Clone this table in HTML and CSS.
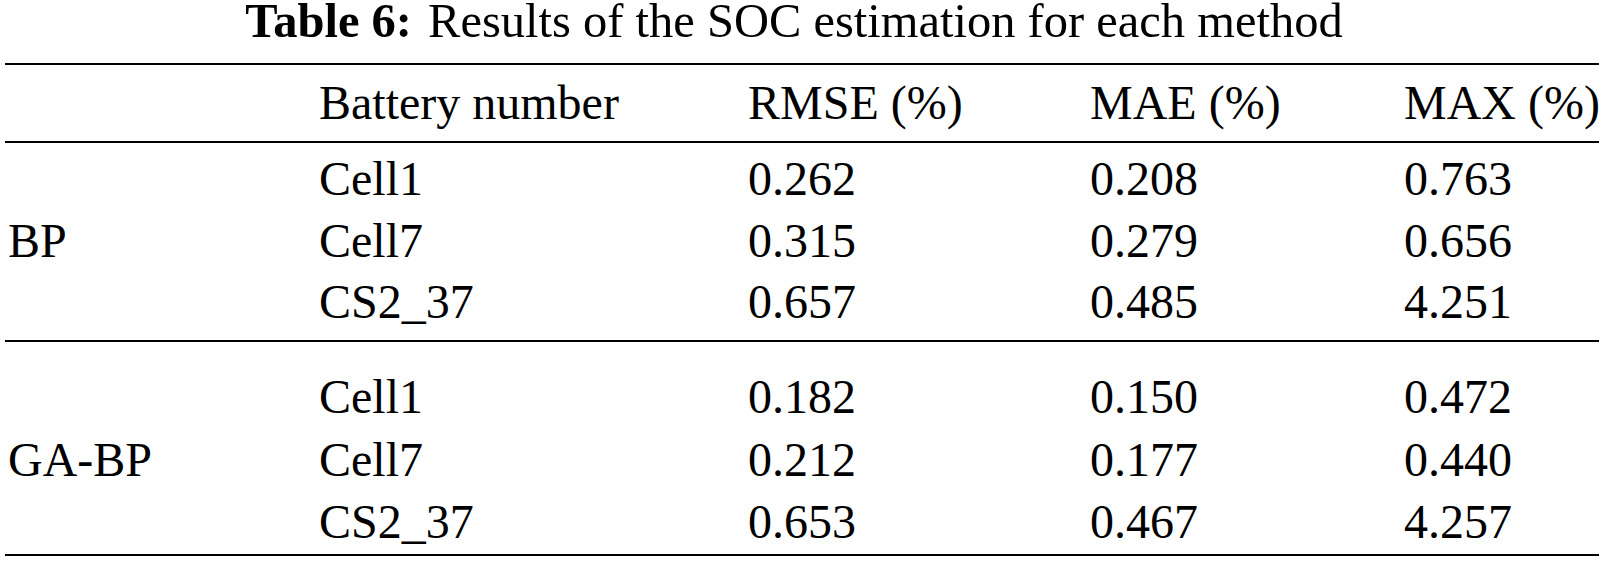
FILE: index.html
```html
<!DOCTYPE html>
<html>
<head>
<meta charset="utf-8">
<link rel="stylesheet" href="styles.css">
</head>
<body>
<div class="page">
  <div class="caption"><span class="label">Table 6:</span> Results of the SOC estimation for each method</div>
  <table class="results">
    <colgroup>
      <col class="c-method">
      <col class="c-battery">
      <col class="c-rmse">
      <col class="c-mae">
      <col class="c-max">
    </colgroup>
    <thead>
      <tr class="head">
        <th></th>
        <th>Battery number</th>
        <th>RMSE (%)</th>
        <th>MAE (%)</th>
        <th>MAX (%)</th>
      </tr>
    </thead>
    <tbody class="group g1">
      <tr class="first"><td></td><td>Cell1</td><td>0.262</td><td>0.208</td><td>0.763</td></tr>
      <tr><td class="method">BP</td><td>Cell7</td><td>0.315</td><td>0.279</td><td>0.656</td></tr>
      <tr class="last"><td></td><td>CS2_37</td><td>0.657</td><td>0.485</td><td>4.251</td></tr>
    </tbody>
    <tbody class="group g2">
      <tr class="first"><td></td><td>Cell1</td><td>0.182</td><td>0.150</td><td>0.472</td></tr>
      <tr><td class="method">GA-BP</td><td>Cell7</td><td>0.212</td><td>0.177</td><td>0.440</td></tr>
      <tr class="last"><td></td><td>CS2_37</td><td>0.653</td><td>0.467</td><td>4.257</td></tr>
    </tbody>
  </table>
</div>
</body>
</html>
```

FILE: styles.css
```css
html, body {
  margin: 0;
  padding: 0;
  background: #fff;
}

.page {
  padding: 0 5px;
  font-family: "Liberation Serif", "Times New Roman", serif;
  color: #000;
  font-size: 48px;
}

.caption {
  text-align: center;
  font-size: 48.5px;
  height: 42px;
  line-height: 42px;
  margin-bottom: 21px;
  padding-right: 16px;
  white-space: nowrap;
}

.caption .label {
  font-weight: bold;
  margin-right: 4px;
}

.results {
  width: 1594px;
  table-layout: fixed;
  border-collapse: collapse;
  border-top: 2px solid #000;
  border-bottom: 2px solid #000;
}

.c-method { width: 314px; }
.c-battery { width: 429px; }
.c-rmse { width: 342px; }
.c-mae { width: 314px; }
.c-max { width: 195px; }

.results th,
.results td {
  padding: 0;
  text-align: left;
  font-weight: normal;
  white-space: nowrap;
  vertical-align: top;
}

.results th:first-child,
.results td:first-child {
  padding-left: 3px;
}

.head th {
  height: 76px;
  line-height: 76px;
  border-bottom: 2px solid #000;
}

.g1 td {
  height: 61.5px;
  line-height: 61.5px;
}

.g1 {
  border-bottom: 2px solid #000;
}

.g1 .first td { padding-top: 5px; }
.g1 .last td { padding-bottom: 7.5px; }

.g2 td {
  height: 62.5px;
  line-height: 62.5px;
}

.g2 .first td { padding-top: 24px; }
```
